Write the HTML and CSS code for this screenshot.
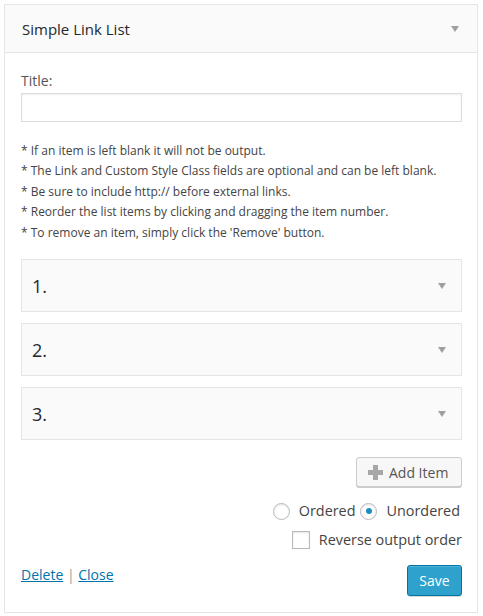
FILE: index.html
```html
<!DOCTYPE html>
<html>
<head>
<meta charset="utf-8">
<link rel="stylesheet" href="styles.css">
</head>
<body>
<div class="widget">
  <div class="widget-top">
    <h3 class="widget-title">Simple Link List</h3>
    <span class="arrow"></span>
  </div>
  <div class="widget-inside">
    <label class="field-label" for="title">Title:</label>
    <input class="text-input" id="title" type="text">
    <div class="notes">
      <p>* If an item is left blank it will not be output.</p>
      <p>* The Link and Custom Style Class fields are optional and can be left blank.</p>
      <p>* Be sure to include http:// before external links.</p>
      <p>* Reorder the list items by clicking and dragging the item number.</p>
      <p>* To remove an item, simply click the 'Remove' button.</p>
    </div>
    <div class="items">
      <div class="item"><span class="item-num">1.</span><span class="arrow"></span></div>
      <div class="item"><span class="item-num">2.</span><span class="arrow"></span></div>
      <div class="item"><span class="item-num">3.</span><span class="arrow"></span></div>
    </div>
    <div class="add-row">
      <button class="button add-btn" type="button"><svg class="plus" width="15" height="15" viewBox="0 0 15 15"><rect x="5" y="0" width="5" height="15" fill="#a7a7a7"/><rect x="0" y="5" width="15" height="5" fill="#a7a7a7"/></svg>Add Item</button>
    </div>
    <div class="option-row">
      <label class="opt"><span class="radio"></span>Ordered</label>
      <label class="opt"><span class="radio checked"></span>Unordered</label>
    </div>
    <div class="option-row check-row">
      <label class="opt"><span class="checkbox"></span>Reverse output order</label>
    </div>
    <div class="widget-control-actions">
      <div class="links"><a href="#">Delete</a> <span class="sep">|</span> <a href="#">Close</a></div>
      <button class="button save-btn" type="button">Save</button>
    </div>
  </div>
</div>
</body>
</html>
```
FILE: styles.css
```css
html, body {
  margin: 0;
  padding: 0;
  background: #fff;
}
body {
  font-family: "Open Sans", "Liberation Sans", sans-serif;
  color: #444;
  font-size: 13px;
  padding: 4px 5px 4px 4px;
}
.widget {
  width: 474px;
  height: 609px;
  box-sizing: border-box;
  border: 1px solid #e5e5e5;
  background: #fff;
  display: flex;
  flex-direction: column;
}
.widget-top {
  height: 47px;
  background: #fafafa;
  border-bottom: 1px solid #e5e5e5;
  display: flex;
  align-items: center;
  justify-content: space-between;
  padding: 0 18px 0 17px;
}
.widget-title {
  margin: 0;
  font-size: 15px;
  font-weight: 400;
  color: #23282d;
}
.arrow {
  width: 0;
  height: 0;
  border-left: 4px solid transparent;
  border-right: 4px solid transparent;
  border-top: 6px solid #a0a0a0;
}
.widget-inside {
  padding: 18px 15px 0 16px;
  flex: 1;
  display: flex;
  flex-direction: column;
}
.field-label {
  display: block;
  font-size: 14px;
  line-height: 20px;
  color: #555;
}
.text-input {
  display: block;
  box-sizing: border-box;
  width: 441px;
  height: 29px;
  margin: 2px 0 0;
  border: 1px solid #ddd;
  box-shadow: inset 0 1px 2px rgba(0,0,0,0.07);
  background: #fff;
  padding: 3px 5px;
}
.notes {
  margin-top: 19px;
}
.notes p {
  margin: 0;
  font-size: 12px;
  line-height: 20.4px;
  color: #444;
}
.items {
  margin-top: 16px;
  display: flex;
  flex-direction: column;
  gap: 11px;
}
.item {
  height: 53px;
  box-sizing: border-box;
  border: 1px solid #e5e5e5;
  background: #fafafa;
  display: flex;
  align-items: center;
  justify-content: space-between;
  padding: 0 15px 0 10px;
}
.item-num {
  font-size: 18px;
  color: #23282d;
}
.add-row {
  display: flex;
  justify-content: flex-end;
  margin-top: 17px;
}
.button {
  font-family: "Open Sans", "Liberation Sans", sans-serif;
  font-size: 14px;
  height: 30px;
  box-sizing: border-box;
  border-radius: 3px;
  cursor: pointer;
  display: flex;
  align-items: center;
}
.add-btn {
  width: 106px;
  border: 1px solid #ccc;
  background: #f7f7f7;
  color: #555;
  box-shadow: 0 1px 0 #ccc;
  padding: 0 10px 0 11px;
  gap: 6px;
}
.option-row {
  display: flex;
  justify-content: flex-end;
  gap: 5px;
  margin-top: 13px;
  padding-right: 2px;
  font-size: 14.4px;
  line-height: 22px;
}
.check-row {
  margin-top: 7px;
  padding-right: 0;
}
.opt {
  display: flex;
  align-items: center;
  gap: 9px;
  color: #444;
}
.radio {
  width: 17px;
  height: 17px;
  box-sizing: border-box;
  border: 1px solid #b4b9be;
  border-radius: 50%;
  background: #fff;
  box-shadow: inset 0 1px 2px rgba(0,0,0,0.1);
  display: flex;
  align-items: center;
  justify-content: center;
}
.radio.checked::after {
  content: "";
  width: 6px;
  height: 6px;
  border-radius: 50%;
  background: #1e8cbe;
}
.checkbox {
  width: 18px;
  height: 18px;
  box-sizing: border-box;
  border: 1px solid #b4b9be;
  background: #fff;
  box-shadow: inset 0 1px 2px rgba(0,0,0,0.1);
}
.widget-control-actions {
  display: flex;
  justify-content: space-between;
  align-items: flex-start;
  margin-top: 14px;
}
.links {
  font-size: 14px;
  line-height: 20px;
  color: #999;
}
.links a {
  color: #0073aa;
}
.sep {
  color: #999;
}
.save-btn {
  width: 55px;
  height: 31px;
  justify-content: center;
  background: #2ea2cc;
  border: 1px solid #0074a2;
  color: #fff;
  box-shadow: inset 0 1px 0 rgba(120,200,230,0.5), 0 1px 0 rgba(0,0,0,0.15);
  padding: 0;
}
```
